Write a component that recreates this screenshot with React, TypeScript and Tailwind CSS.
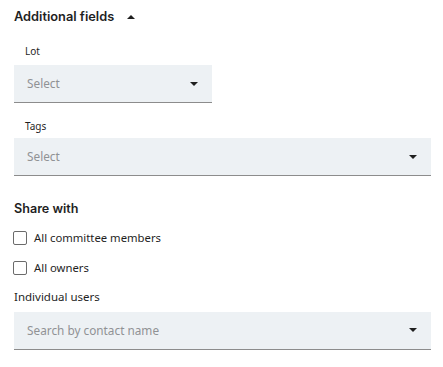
import React from 'react';

const Caret: React.FC<{ up?: boolean }> = ({ up }) => (
  <svg width="8" height="4" viewBox="0 0 8 4" className="shrink-0">
    {up ? <path d="M0 4 L4 0 L8 4 Z" fill="#1f1f1f" /> : <path d="M0 0 L8 0 L4 4 Z" fill="#1f1f1f" />}
  </svg>
);

const SelectBox: React.FC<{ placeholder: string; className?: string }> = ({ placeholder, className }) => (
  <div className={`flex h-[38px] items-center justify-between bg-[#edf1f4] border-b border-[#8c8c8c] pl-[13px] pr-[14px] ${className ?? ''}`}>
    <span className="text-[11.8px] text-[#909295]">{placeholder}</span>
    <Caret />
  </div>
);

const Check: React.FC<{ label: string }> = ({ label }) => (
  <label className="flex items-center gap-[7px]">
    <span className="w-[14px] h-[14px] rounded-[2px] border-[1.5px] border-[#6b6b6b] bg-white" />
    <span className="text-[11.3px] text-[#1f1f1f]">{label}</span>
  </label>
);

export default function App() {
  return (
    <div className="w-[443px] h-[367px] bg-white px-[14px] pt-[8px] text-[#1f1f1f]" style={{ fontFamily: '"Noto Sans", sans-serif' }}>
      <div className="flex items-center gap-[13px] h-[18px]">
        <h2 className="text-[12.8px] font-semibold" style={{ fontFamily: 'Inter, sans-serif' }}>Additional fields</h2>
        <Caret up />
      </div>

      <div className="pl-[11px] mt-[18px] text-[10px] leading-[14px]">Lot</div>
      <SelectBox placeholder="Select" className="w-[198px] mt-[7px]" />

      <div className="pl-[11px] mt-[16px] text-[10px] leading-[14px]">Tags</div>
      <SelectBox placeholder="Select" className="w-[417px] mt-[5px]" />

      <h3 className="mt-[24px] text-[12.6px] font-semibold leading-[18px]" style={{ fontFamily: 'Inter, sans-serif' }}>Share with</h3>

      <div className="mt-[12px] flex flex-col gap-[13px] -ml-[1px]">
        <Check label="All committee members" />
        <Check label="All owners" />
      </div>

      <div className="mt-[12px] text-[11.5px] leading-[16px]">Individual users</div>
      <SelectBox placeholder="Search by contact name" className="w-[417px] mt-[7px]" />
    </div>
  );
}
